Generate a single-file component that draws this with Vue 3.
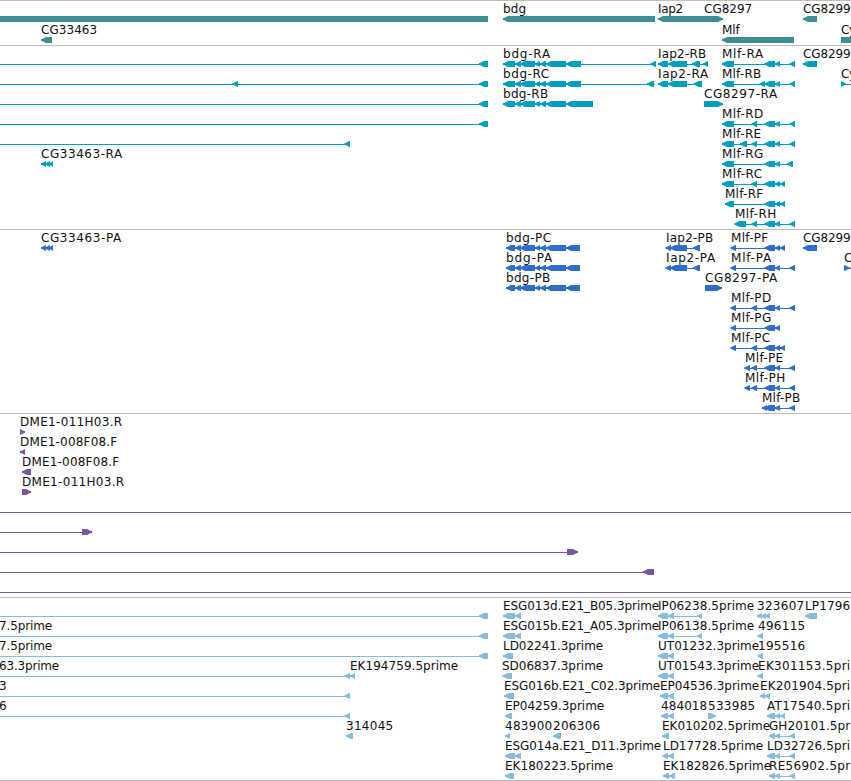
<template>
  <main class="browser">
    <section
      v-for="track in tracks"
      :key="track.name"
      class="track"
      :class="track.name"
    >
      <svg class="lane" width="851" :height="track.height - 1">
        <g
          v-for="(row, i) in track.rows"
          :key="i"
          :transform="`translate(0 ${15 + i * track.pitch})`"
        >
          <rect
            v-for="(line, j) in row.lines"
            :key="'l' + j"
            :x="line[0]"
            y="3"
            :width="line[1] - line[0]"
            height="1"
          />
          <path v-for="(box, j) in row.boxes" :key="'b' + j" :d="shape(box)" />
          <text
            v-for="(label, j) in row.labels"
            :key="'t' + j"
            class="label"
            :x="label[1]"
            y="-3"
            :textLength="label[2] - 0.8"
          >{{ label[0] }}</text>
        </g>
      </svg>
    </section>
  </main>
</template>

<script setup>
// a box is [start, end, direction], default direction is left
const shape = ([a, b, dir]) => {
  if (dir === 'flat') return `M${a} 0H${b}V6H${a}Z`
  const head = Math.min(5, b - a)
  if (dir === 'right') {
    return `M${a} 0H${b - head}L${b - 1} 2H${b}V4H${b - 1}L${b - head} 6H${a}Z`
  }
  return `M${b} 0H${a + head}L${a + 1} 2H${a}V4H${a + 1}L${a + head} 6H${b}Z`
}

const row = (labels = [], boxes = [], lines = []) => ({ labels, boxes, lines })

// shared exons
const end = [479, 488]
const mid = [[515, 521], [520, 535], [535, 540], [540, 546], [546, 566]]
const bdgR = [[503, 515], ...mid]
const bdgP = [[506, 515], ...mid, [566, 580]]
const m1 = [722, 734]
const m2 = [751.5, 757]
const m3 = [764.5, 775]
const m4 = [775, 780]
const m5 = [780, 785]
const m6 = [789.5, 795]
const p1 = [730.5, 736]

const genes = [
  row(
    [['bdg', 503, 23.8], ['Iap2', 658, 26], ['CG8297', 704, 49], ['CG8299', 803, 48.5]],
    [[0, 488, 'flat'], [503, 655], [658, 710], [704, 723, 'right'], [803, 817]]
  ),
  row(
    [['CG33463', 41, 57], ['Mlf', 722, 18.5], ['Cy', 841, 16]],
    [[41, 52], [722, 794], [841, 870, 'right']]
  )
]

const transcripts = [
  row(
    [['bdg-RA', 503, 48], ['Iap2-RB', 658, 49], ['Mlf-RA', 722, 42], ['CG8299', 803, 48.5]],
    [end, ...bdgR, [566, 581], [650.5, 656], [658, 668], [668, 687], [692, 700], [703, 708], m1, m3, m4, m6, [803, 817]],
    [[0, 488], [503, 656], [658, 708], [722, 795]]
  ),
  row(
    [['bdg-RC', 503, 47], ['Iap2-RA', 658, 51], ['Mlf-RB', 722, 40], ['Cy', 841, 16]],
    [[232.5, 238], end, ...bdgR, [566, 581], [647, 654], [658, 668], [668, 687], [693.5, 702], m1, [759.5, 765], m3, m4, m6, [841, 846, 'right']],
    [[0, 488], [503, 655], [658, 702], [722, 795], [841, 851]]
  ),
  row(
    [['bdg-RB', 503, 46], ['CG8297-RA', 704, 74]],
    [end, ...bdgR, [566, 593], [704, 723, 'right']],
    [[0, 488]]
  ),
  row([['Mlf-RD', 722, 42]], [end, m1, m2, m3, m4, m6], [[0, 488], [722, 795]]),
  row([['Mlf-RE', 722, 40]], [[344.5, 350], m1, [740, 747], m2, m3, m4, m6], [[0, 350], [722, 795]]),
  row(
    [['CG33463-RA', 41, 82], ['Mlf-RG', 722, 42]],
    [[41, 46], [45, 50], [49, 53], m1, m3, m4, [787, 793]],
    [[722, 793]]
  ),
  row([['Mlf-RC', 722, 41]], [m1, m2, m3, m4, m5], [[722, 785]]),
  row([['Mlf-RF', 725, 39]], [[725, 734], m3, m4, m5], [[725, 785]]),
  row([['Mlf-RH', 735, 42]], [[734.5, 746], m2, m3, m4, m6], [[735, 795]])
]

const proteins = [
  row(
    [['CG33463-PA', 41, 81], ['bdg-PC', 506, 46], ['Iap2-PB', 666, 48], ['Mlf-PF', 731, 38], ['CG8299', 803, 48.5]],
    [[41, 46], [45, 50], [49, 53], ...bdgP, [665.5, 671], [670, 687], [693, 700], p1, m3, m4, m5, [803, 817]],
    [[666, 700], [731, 785]]
  ),
  row(
    [['bdg-PA', 506, 47], ['Iap2-PA', 666, 50], ['Mlf-PA', 731, 41], ['C', 844, 9]],
    [...bdgP, [665.5, 671], [670, 687], [693, 700], p1, m3, m4, m6, [844, 849.5, 'right']],
    [[666, 700], [731, 795], [844, 851]]
  ),
  row([['bdg-PB', 506, 45], ['CG8297-PA', 705, 73]], [...bdgP, [705, 722, 'right']]),
  row([['Mlf-PD', 731, 41]], [p1, m2, m3, m4, m6], [[731, 795]]),
  row([['Mlf-PG', 731, 41]], [p1, m3, m4], [[731, 780]]),
  row([['Mlf-PC', 731, 40]], [p1, m2, m3, m4, m5], [[731, 785]]),
  row([['Mlf-PE', 745, 39]], [[744.5, 750], m2, m3, m4, m6], [[745, 795]]),
  row([['Mlf-PH', 745, 41]], [[744.5, 750], m2, m3, m4, m6], [[745, 795]]),
  row([['Mlf-PB', 762, 39]], [[762, 767], m3, m4, m6], [[762, 795]])
]

const clones = [
  row([['DME1-011H03.R', 20, 103]], [[20, 25, 'right']]),
  row([['DME1-008F08.F', 20, 98]], [[20, 25]]),
  row([['DME1-008F08.F', 22, 98]], [[22, 31]]),
  row([['DME1-011H03.R', 22, 103]], [[22, 31, 'right']]),
  row([], [], [[0, 851]]),
  row([], [[82, 92, 'right']], [[0, 84]]),
  row([], [[567, 578, 'right']], [[0, 570]]),
  row([], [[643, 654]], [[0, 654]]),
  row([], [], [[0, 851]])
]

const a1 = [658, 668]
const a2 = [668, 674]
const ests = [
  row(
    [['ESG013d.E21_B05.3prime', 503, 157], ['IP06238.5prime', 658, 97], ['323607', 757, 48], ['LP1796', 805, 46]],
    [end, [503, 515], [515, 521], a1, a2, [697, 702], [757, 762], [761, 766], [765, 770], [805, 817]],
    [[0, 488], [658, 702]]
  ),
  row(
    [['7.5prime', -1, 54], ['ESG015b.E21_A05.3prime', 503, 157], ['IP06138.5prime', 658, 97], ['496115', 758, 48]],
    [end, [503, 515], [515, 521], a1, a2, [697, 702], [757.5, 763]],
    [[0, 488], [658, 702]]
  ),
  row(
    [['7.5prime', -1, 54], ['LD02241.3prime', 503, 101], ['UT01232.3prime', 658, 102], ['195516', 758, 48]],
    [end, [503, 513], a1, a2, [757.5, 763]],
    [[0, 488]]
  ),
  row(
    [['63.3prime', -1, 61], ['EK194759.5prime', 350, 109], ['SD06837.3prime', 502, 102], ['UT01543.3prime', 658, 102], ['EK301153.5pri', 758, 93]],
    [[344.5, 350], [350, 355], [502.5, 512], a1, a2, [757.5, 763]],
    [[0, 350]]
  ),
  row(
    [['3', -1, 8], ['ESG016b.E21_C02.3prime', 504, 157], ['EP04536.3prime', 660, 100], ['EK201904.5pri', 760, 91]],
    [[344.5, 350], [504, 514], [660, 668], a2, [760, 765], [764.5, 770]],
    [[0, 350]]
  ),
  row(
    [['6', -1, 8], ['EP04259.3prime', 505, 100], ['484018', 661, 47], ['533985', 708, 48], ['AT17540.5pri', 767, 84]],
    [[344.5, 350], [505, 512], [661, 668], a2, [708, 716, 'right'], [767, 775], m4, m5],
    [[0, 350]]
  ),
  row(
    [['314045', 346, 48], ['483900', 505, 48], ['206306', 553, 48], ['EK010202.5prime', 662, 109], ['GH20101.5pr', 769, 82]],
    [[346, 353], [505, 510], [553, 561], [662, 669], [769, 775], m4, m6],
    [[769, 795]]
  ),
  row(
    [['ESG014a.E21_D11.3prime', 505, 157], ['LD17728.5prime', 663, 101], ['LD32726.5pri', 767, 84]],
    [[505, 515], [515, 521], [662.5, 668], a2, [767, 775], m4, m6],
    [[767, 795]]
  ),
  row(
    [['EK180223.5prime', 505, 109], ['EK182826.5prime', 663, 109], ['RE56902.5pr', 769, 82]],
    [[505, 514], [663, 669], [669, 675], [769, 775], m4, m6],
    [[769, 795]]
  )
]

const tracks = [
  { name: 'genes', height: 45, pitch: 21, rows: genes },
  { name: 'transcripts', height: 184, pitch: 20, rows: transcripts },
  { name: 'proteins', height: 184, pitch: 20, rows: proteins },
  { name: 'clones', height: 184, pitch: 20, rows: clones },
  { name: 'ests', height: 183, pitch: 20, rows: ests }
]
</script>

<style scoped>
.browser {
  width: 851px;
  overflow: hidden;
  background: #fff;
  border-bottom: 1px solid #bebebe;
}

.track {
  border-top: 1px solid #bebebe;
}

.lane {
  display: block;
}

.label {
  font-family: 'DejaVu Sans', sans-serif;
  font-size: 12px;
  fill: #111;
}

.genes {
  fill: #3d8e93;
}

.transcripts {
  fill: #009fbf;
}

.proteins {
  fill: #306ecc;
}

.clones {
  fill: #7558a5;
}

.ests {
  fill: #87bbdd;
}
</style>
